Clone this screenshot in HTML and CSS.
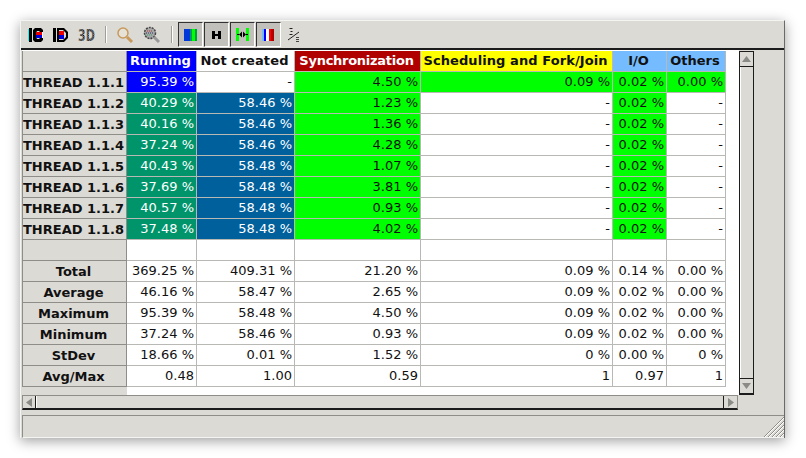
FILE: index.html
```html
<!DOCTYPE html>
<html>
<head>
<meta charset="utf-8">
<title>Thread states</title>
<link rel="stylesheet" href="styles.css">
</head>
<body>
<div class="window">
  <div class="toolbar">
    <span class="tool"><svg width="16" height="16" viewBox="0 0 16 16"><path d="M1 1h3v14H1z" fill="#000"/><path d="M0 2h1v12H0z" fill="#0ff"/><path d="M7 1h6l2 2v2h-3l-1-1H9L8 6v4l1 2h2l1-1h3v2l-2 2H7L5 13V3z" fill="#000"/><path d="M8 5h6v3H8z" fill="#e00"/><path d="M8 8h6v3H8z" fill="#00d"/><path d="M14 5h1v6h-1z" fill="#fff"/></svg></span>
    <span class="tool"><svg width="16" height="16" viewBox="0 0 16 16"><path d="M0 1h3v14H0z" fill="#000"/><path d="M4 1h7l4 4v6l-4 4H4zM6 3v10h4l3-3V6l-3-3z" fill="#000"/><path d="M6 4h5v4H6z" fill="#e00"/><path d="M6 8h5v4H6z" fill="#00d"/></svg></span>
    <span class="tool"><svg class="dither-icon" width="17" height="14" viewBox="0 0 20 12" preserveAspectRatio="none"><defs><pattern id="dither" width="2" height="2" patternUnits="userSpaceOnUse"><rect width="2" height="2" fill="#9a9a9a"/><rect width="1" height="1" fill="#000"/><rect x="1" y="1" width="1" height="1" fill="#222"/></pattern></defs><text class="dither-text" x="0" y="11" fill="url(#dither)">3D</text></svg></span>
    <span class="sep"></span>
    <span class="tool"><svg width="18" height="18" viewBox="0 0 18 18"><circle cx="7" cy="7" r="5" fill="#e6e2d8" stroke="#c8995a" stroke-width="1.500"/><path d="M11 11l5 5" stroke="#c8995a" stroke-width="3"/></svg></span>
    <span class="tool"><svg width="18" height="18" viewBox="0 0 18 18"><circle cx="8" cy="7" r="5.500" fill="#a8a8a8" stroke="#444" stroke-width="1.500" stroke-dasharray="2 1"/><path d="M5 5h6" stroke="#b33" stroke-width="1" stroke-dasharray="1 1"/><path d="M4 7h8" stroke="#336" stroke-width="1" stroke-dasharray="1 1"/><path d="M5 9h6" stroke="#3a6" stroke-width="1" stroke-dasharray="1 1"/><path d="M12 11l5 5" stroke="#999" stroke-width="3"/></svg></span>
    <span class="sep sep-second"></span>
    <span class="toggle"><svg width="13" height="12" viewBox="0 0 13 12"><path d="M0 0h6v12H0z" fill="#0039d8"/><path d="M6 0h2v12H6z" fill="#009a60"/><path d="M8 0h3v12H8z" fill="#00ff00"/><path d="M11 0h2v12h-2z" fill="#00a040"/></svg></span>
    <span class="toggle"><svg width="9" height="8" viewBox="0 0 9 8"><path d="M0 0h3v3h3V0h3v8H6V5H3v3H0z" fill="#000"/></svg></span>
    <span class="toggle"><svg width="13" height="13" viewBox="0 0 13 13"><path d="M0 0h3v13H0zM10 0h3v13h-3z" fill="#00ff00"/><path d="M1 6h2v1H1zM6 3.500v6L3 6.500zM7 3.500v6l3-3zM10 6h2v1h-2z" fill="#000"/></svg></span>
    <span class="toggle"><svg width="12" height="12" viewBox="0 0 12 12"><path d="M0 0h2v12H0z" fill="#75bbff"/><path d="M2 0h2v12H2z" fill="#0000ff"/><path d="M4 0h3v12H4z" fill="#fff"/><path d="M7 0h2v12H7z" fill="#ff0000"/><path d="M9 0h3v12H9z" fill="#b00000"/></svg></span>
    <span class="tool"><svg width="14" height="16" viewBox="0 0 14 16"><path d="M2.500 1.500h3M3.500 4.500h2M2.500 7.500h3M1 13L12 5" fill="none" stroke="#222" stroke-width="1"/><path d="M9 10h3v1H9zM9 12h3v1H9zM9 14h3v1H9z" fill="#444"/></svg></span>
  </div>
  <div class="middle">
    <div class="viewport">
      <table class="stats">
        <colgroup><col class="c0"><col class="c1"><col class="c2"><col class="c3"><col class="c4"><col class="c5"><col class="c6"></colgroup>
        <thead>
          <tr><th class="corner"></th><th class="h-run">Running</th><th class="h-nc">Not created</th><th class="h-sync">Synchronization</th><th class="h-sched">Scheduling and Fork/Join</th><th class="h-io">I/O</th><th class="h-oth">Others</th></tr>
        </thead>
        <tbody>
          <tr><th>THREAD 1.1.1</th><td class="blue">95.39 %</td><td>-</td><td class="green">4.50 %</td><td class="green">0.09 %</td><td class="green">0.02 %</td><td class="green">0.00 %</td></tr>
          <tr><th>THREAD 1.1.2</th><td class="teal">40.29 %</td><td class="navy">58.46 %</td><td class="green">1.23 %</td><td>-</td><td class="green">0.02 %</td><td>-</td></tr>
          <tr><th>THREAD 1.1.3</th><td class="teal">40.16 %</td><td class="navy">58.46 %</td><td class="green">1.36 %</td><td>-</td><td class="green">0.02 %</td><td>-</td></tr>
          <tr><th>THREAD 1.1.4</th><td class="teal">37.24 %</td><td class="navy">58.46 %</td><td class="green">4.28 %</td><td>-</td><td class="green">0.02 %</td><td>-</td></tr>
          <tr><th>THREAD 1.1.5</th><td class="teal">40.43 %</td><td class="navy">58.48 %</td><td class="green">1.07 %</td><td>-</td><td class="green">0.02 %</td><td>-</td></tr>
          <tr><th>THREAD 1.1.6</th><td class="teal">37.69 %</td><td class="navy">58.48 %</td><td class="green">3.81 %</td><td>-</td><td class="green">0.02 %</td><td>-</td></tr>
          <tr><th>THREAD 1.1.7</th><td class="teal">40.57 %</td><td class="navy">58.48 %</td><td class="green">0.93 %</td><td>-</td><td class="green">0.02 %</td><td>-</td></tr>
          <tr><th>THREAD 1.1.8</th><td class="teal">37.48 %</td><td class="navy">58.48 %</td><td class="green">4.02 %</td><td>-</td><td class="green">0.02 %</td><td>-</td></tr>
          <tr><th></th><td></td><td></td><td></td><td></td><td></td><td></td></tr>
          <tr><th>Total</th><td>369.25 %</td><td>409.31 %</td><td>21.20 %</td><td>0.09 %</td><td>0.14 %</td><td>0.00 %</td></tr>
          <tr><th>Average</th><td>46.16 %</td><td>58.47 %</td><td>2.65 %</td><td>0.09 %</td><td>0.02 %</td><td>0.00 %</td></tr>
          <tr><th>Maximum</th><td>95.39 %</td><td>58.48 %</td><td>4.50 %</td><td>0.09 %</td><td>0.02 %</td><td>0.00 %</td></tr>
          <tr><th>Minimum</th><td>37.24 %</td><td>58.46 %</td><td>0.93 %</td><td>0.09 %</td><td>0.02 %</td><td>0.00 %</td></tr>
          <tr><th>StDev</th><td>18.66 %</td><td>0.01 %</td><td>1.52 %</td><td>0 %</td><td>0.00 %</td><td>0 %</td></tr>
          <tr><th>Avg/Max</th><td>0.48</td><td>1.00</td><td>0.59</td><td>1</td><td>0.97</td><td>1</td></tr>
        </tbody>
      </table>
      <div class="table-foot"><div class="foot-head"></div></div>
    </div>
    <div class="vscroll">
      <div class="arrow"><svg width="9" height="6" viewBox="0 0 9 6"><path d="M4.500 0L9 6H0z" fill="#8a8a86"/></svg></div>
      <div class="v-thumb"></div>
      <div class="arrow arrow-down"><svg width="9" height="6" viewBox="0 0 9 6"><path d="M0 0h9L4.500 6z" fill="#8a8a86"/></svg></div>
    </div>
    <div class="hscroll">
      <div class="harrow"><svg width="6" height="9" viewBox="0 0 6 9"><path d="M6 0v9L0 4.500z" fill="#8a8a86"/></svg></div>
      <div class="h-thumb"></div>
      <div class="harrow harrow-end"><svg width="6" height="9" viewBox="0 0 6 9"><path d="M0 0v9l6-4.500z" fill="#8a8a86"/></svg></div>
    </div>
  </div>
  <div class="status">
    <svg class="grip" width="21" height="21" viewBox="0 0 21 21"><path d="M21 1L1 21M21 5L5 21M21 9L9 21M21 13L13 21M21 17L17 21" stroke="#8f8d88" stroke-width="1"/><path d="M21 2L2 21M21 6L6 21M21 10L10 21M21 14L14 21M21 18L18 21" stroke="#fff" stroke-width="1"/></svg>
  </div>
</div>
</body>
</html>
```
FILE: styles.css
```css
html, body { margin: 0; padding: 0; background: #fff; }
body { width: 806px; height: 458px; overflow: hidden; padding: 20px 0 0 20px; box-sizing: border-box; font-family: "DejaVu Sans", sans-serif; }
.window { width: 765px; height: 418px; background: #dcdad5; border-top: 1px solid #f4f4f2; border-right: 1px solid #6a6a68; border-left: 1px solid #f4f4f2; box-sizing: border-box; box-shadow: 0 3px 12px rgba(0,0,0,.38); display: flex; flex-direction: column; }
.toolbar { height: 29px; flex: none; box-sizing: border-box; border-bottom: 2px solid #1c1c1c; display: flex; align-items: center; padding-left: 2px; }
.tool { width: 25.500px; height: 22px; display: flex; align-items: center; justify-content: center; flex: none; }
.dither-icon { overflow: visible; }
.dither-text { font: 700 13px "DejaVu Sans", sans-serif; }
.sep { width: 2px; height: 17px; flex: none; background: #fff; border-left: 1px solid #a09e99; box-sizing: border-box; margin: 0 6px 0 5px; }
.sep-second { margin: 0 5px 0 7px; }
.toggle { width: 25px; height: 25px; margin-right: 1px; box-sizing: border-box; flex: none; background: #c2c0bb; border: 1px solid; border-color: #333 #fff #fff #333; display: flex; align-items: center; justify-content: center; }
.middle { flex: 1; display: grid; grid-template-columns: 717px 15px; grid-template-rows: 345px 15px; padding-left: 1px; min-height: 0; align-content: start; }
.viewport { background: #fff; width: 717px; height: 345px; padding-top: 1px; box-sizing: border-box; grid-row: 1; grid-column: 1; overflow: hidden; }
.stats { table-layout: fixed; border-collapse: separate; border-spacing: 0; width: 704px; font-size: 13px; }
.c0 { width: 105px; } .c1 { width: 70px; } .c2 { width: 98px; } .c3 { width: 126px; } .c4 { width: 192px; } .c5 { width: 54px; } .c6 { width: 59px; }
.stats th, .stats td { height: 21px; box-sizing: border-box; padding: 0 2px 1px; border-right: 1px solid #b8b8b4; border-bottom: 1px solid #b8b8b4; white-space: nowrap; overflow: hidden; line-height: 19px; }
.stats td { text-align: right; color: #111; font-weight: 400; background: #fff; }
.stats tbody th { background: #dcdad5; color: #111; font-weight: 700; text-align: center; border-right-color: #8f8d88; border-bottom-color: #8f8d88; border-left: 1px solid #8f8d88; padding: 0 2px 0 0; }
.stats thead th { font-weight: 700; text-align: center; padding: 0 2px 1px 0; line-height: 19px; }
.corner { background: #dcdad5; }
.stats thead .corner { border-bottom: 1px solid #8f8d88; border-left: 1px solid #8f8d88; border-right: 1px solid #8f8d88; }
.stats thead .h-run { background: #0000ff; color: #fff; }
.stats thead .h-nc { background: #fff; color: #111; letter-spacing: .15px; }
.stats thead .h-sync { background: #b00000; color: #fff; letter-spacing: -.27px; }
.stats thead .h-sched { background: #ffff00; color: #111; letter-spacing: .08px; }
.stats thead .h-io, .stats thead .h-oth { background: #75bbff; color: #111; }
.stats td.blue { background: #0000ff; color: #fff; }
.stats td.teal { background: #00946b; color: #fff; }
.stats td.navy { background: #00609c; color: #fff; }
.stats td.green { background: #00ff00; }
.table-foot { height: 9px; background: #fff; }
.foot-head { width: 105px; height: 100%; background: #dcdad5; }
.vscroll { grid-row: 1; grid-column: 2; width: 15px; display: flex; flex-direction: column; box-sizing: border-box; background: #dcdad5; border: 1px solid #1c1c1c; border-bottom-width: 2px; height: 344px; margin-top: 1px; }
.arrow { height: 15px; flex: none; display: flex; align-items: center; justify-content: center; box-sizing: border-box; border-bottom: 1px solid #1c1c1c; }
.arrow-down { border-top: 1px solid #1c1c1c; border-bottom: 0; }
.v-thumb { flex: 1; background: #dcdad5; border-left: 1px solid #fff; }
.hscroll { grid-row: 2; grid-column: 1; height: 15px; display: flex; box-sizing: border-box; border: 1px solid #8f8d88; border-bottom: 2px solid #1c1c1c; background: #dcdad5; width: 716px; }
.harrow { width: 13px; flex: none; display: flex; align-items: center; justify-content: center; border-right: 1px solid #1c1c1c; box-sizing: border-box; }
.harrow-end { border-right: 0; border-left: 1px solid #1c1c1c; width: 14px; }
.h-thumb { flex: 1; border-left: 1px solid #fff; }
.status { position: relative; flex: none; height: 23px; margin-top: 5px; margin-left: 1px; box-sizing: border-box; border-top: 1px solid #8f8d88; border-bottom: 1px solid #f4f4f2; border-left: 1px solid #8f8d88; }
.grip { position: absolute; right: 0; bottom: 0; }
```
